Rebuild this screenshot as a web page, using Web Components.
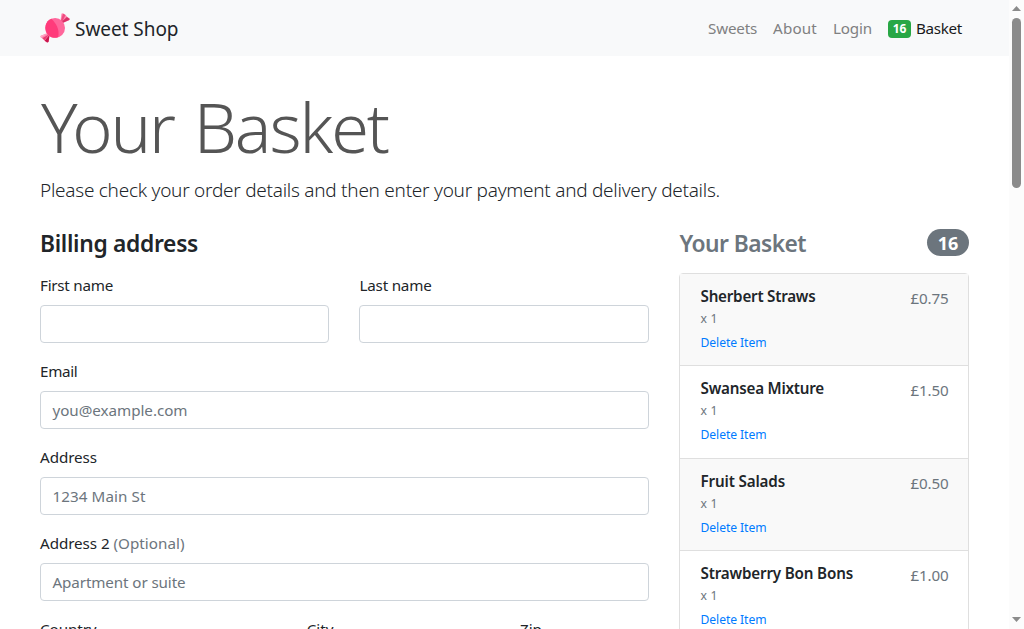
<!DOCTYPE html>
<html lang="en">
<head>
<meta charset="utf-8">
<title>Sweet Shop</title>
<style>
html,body{margin:0;height:100%;overflow:hidden;background:#fff}
body{font:16px/24px "Noto Sans","Open Sans",sans-serif;color:#212529}
</style>
</head>
<body>
<shop-page></shop-page>
<script>
const define = (name, html, setup) => customElements.define(name, class extends HTMLElement {
  connectedCallback() {
    if (this.shadowRoot) return;
    const t = document.createElement('template');
    t.innerHTML = html;
    this.attachShadow({mode: 'open'}).append(t.content.cloneNode(true));
    if (setup) setup(this, this.shadowRoot);
  }
});

/* A single line of text tracked so that it fills the width given in "w". */
define('ui-text', `<style>
:host{display:inline-block;white-space:nowrap;font-size:.95em;vertical-align:top}
span{display:inline-block}
</style><span><slot></slot></span>`, (el, root) => {
  const w = parseFloat(el.getAttribute('w'));
  if (!w) return;
  const s = root.querySelector('span');
  const n = el.textContent.length;
  s.style.letterSpacing = ((w - s.getBoundingClientRect().width) / n) + 'px';
  el.style.width = w + 'px';
});

define('sweet-icon', `<style>:host{display:block;width:30px;height:30px}svg{display:block}</style>
<svg width="30" height="30" viewBox="0 0 30 30">
<path d="M20.4 8 21.4 1Q21.8-.1 22.9 .5L25.6 2.1Q26.9 4.2 29.3 5.3Q30.4 6.2 29.3 7L22.6 9.9Z" fill="#ff8ab2"/>
<path d="M20.8 8 23 .6 25.5 2.1 22.2 9Z" fill="#f04c80"/><path d="m21.8 8.8 5-4.7 2.7 1.6-.2 1.3-6.7 2.9Z" fill="#d92f66"/>
<path d="M9.6 21.8 8.6 28.8Q8.1 30 7 29.4L4.6 27.8Q3.2 25.6 1 24.5Q-.2 23.7 .8 22.8L7.4 20Z" fill="#ff83ad"/>
<path d="m9.6 21.8-1 7-1.3.8L4.6 27.8Z" fill="#c9164d"/><path d="m8 20.5-7 4-.2-1.7Z" fill="#ffabc7"/><path d="m9.2 21.3-4.7 6-2.2-2Z" fill="#e83d72"/>
<circle cx="15.1" cy="14.9" r="9.9" fill="#ff669b"/>
<path d="M11.4 5.8C5.2 8 3.5 16 7.7 21.4 11 25.3 15.6 25.2 18.1 24.2 20 17 16 10 11.4 5.8Z" fill="#ff3b7b"/>
</svg>`);

define('shop-nav', `<style>
:host{display:block;height:56px;background:#f8f9fa}
nav{width:930px;height:100%;margin:0 40px;display:flex;align-items:center;justify-content:space-between}
.brand{display:flex;align-items:center;gap:5px;font-size:20px;line-height:30px;height:30px}
.brand ui-text{padding-top:1px}
.links{display:flex;align-items:center;gap:16px;color:#7f8081;padding-right:8px;height:26px}
.cart{display:flex;gap:5px;align-items:center;color:#181a1b}
.badge{background:#28a745;color:#fff;border-radius:4px;font-weight:700;font-size:12px;line-height:18px;width:23px;height:18px;text-align:center;margin-top:2px}
</style>
<nav><div class="brand"><sweet-icon></sweet-icon><ui-text w="103.5">Sweet Shop</ui-text></div>
<div class="links"><ui-text w="49">Sweets</ui-text><ui-text w="44">About</ui-text><ui-text w="39">Login</ui-text>
<div class="cart"><span class="badge">16</span><ui-text w="46">Basket</ui-text></div></div></nav>`);

define('form-field', `<style>
:host{display:block;min-width:0}
.label{height:24px;margin-bottom:8px;display:flex;gap:4px}
.box{box-sizing:border-box;height:38px;border:1px solid #ced4da;border-radius:4px;background:#fff;padding:6px 11.5px;color:#6c757d}
</style><div class="label"><slot></slot></div><div class="box"><slot name="hint"></slot></div>`);

define('basket-item', `<style>
:host{display:flex;justify-content:space-between;align-items:flex-start;padding:12px 19.5px 0 20.5px;border-bottom:1px solid #dfdfdf;box-sizing:border-box;height:92.4px}
:host(:first-child){height:92px}
:host(:nth-child(odd)){background:#f9f9f9}
.name{display:block;font-weight:600;line-height:21.2px;height:20.2px}
.qty,.del{display:block;height:24px;font-size:12.8px;line-height:25px}
.qty{color:#6c757d}.del{color:#007bff}
.price{color:#6c757d}
</style>
<div><span class="name"><slot name="name"></slot></span><span class="qty"><ui-text w="17">x 1</ui-text></span><span class="del"><ui-text w="66">Delete Item</ui-text></span></div>
<div class="price"><slot name="price"></slot></div>`);

define('basket-panel', `<style>
:host{display:block}
header{display:flex;justify-content:space-between;align-items:center;height:28.8px;margin-bottom:16px;color:#6c757d;font-size:24px;font-weight:600;line-height:28.8px}
header ui-text{padding:4px 0 0 .5px}
.pill{width:42px;height:27px;border-radius:14px;background:#6c757d;color:#fff;font-size:18px;font-weight:700;line-height:28px;text-align:center}
.list{border:1px solid #dfdfdf;border-radius:4px 4px 0 0}
</style>
<header><ui-text w="126.5">Your Basket</ui-text><span class="pill">16</span></header>
<div class="list">
<basket-item><ui-text slot="name" w="115">Sherbert Straws</ui-text><ui-text slot="price" w="38">£0.75</ui-text></basket-item>
<basket-item><ui-text slot="name" w="123.5">Swansea Mixture</ui-text><ui-text slot="price" w="38">£1.50</ui-text></basket-item>
<basket-item><ui-text slot="name" w="84.5">Fruit Salads</ui-text><ui-text slot="price" w="38">£0.50</ui-text></basket-item>
<basket-item><ui-text slot="name" w="152.5">Strawberry Bon Bons</ui-text><ui-text slot="price" w="38">£1.00</ui-text></basket-item>
</div>`);

define('billing-form', `<style>
:host{display:block}
h4{margin:0 0 16px;padding-top:2px;box-sizing:border-box;height:28.8px;font-size:24px;line-height:28.8px;font-weight:600}
.fields{display:grid;gap:16px}
.two{display:grid;grid-template-columns:289px 290px;gap:30px}
.three{display:grid;grid-template-columns:236.67px 183.33px 129px;gap:30px}
.opt{color:#6c757d}
.last{padding-left:.5px}
</style>
<h4><ui-text w="158">Billing address</ui-text></h4>
<div class="fields">
<div class="two"><form-field><ui-text w="73">First name</ui-text></form-field><form-field><ui-text class="last" w="72">Last name</ui-text></form-field></div>
<form-field><ui-text w="37.5">Email</ui-text><ui-text slot="hint" w="135">you@example.com</ui-text></form-field>
<form-field><ui-text w="57">Address</ui-text><ui-text slot="hint" w="93">1234 Main St</ui-text></form-field>
<form-field><ui-text w="69.5">Address 2</ui-text><ui-text class="opt" w="71">(Optional)</ui-text><ui-text slot="hint" w="133">Apartment or suite</ui-text></form-field>
<div class="three"><form-field><ui-text w="56.5">Country</ui-text></form-field><form-field><ui-text w="27">City</ui-text></form-field><form-field><ui-text w="22">Zip</ui-text></form-field></div>
</div>`);

define('scroll-rail', `<style>
:host{display:flex;flex-direction:column;align-items:center;background:#fcfcfc;height:100%}
.thumb{width:9px;height:170px;border-radius:5px;background:#8b8b8b;margin-top:7px}
.down{margin-top:auto;margin-bottom:7px}
svg{display:block;margin-top:6px;flex:none}
</style><svg width="9" height="5"><path d="M4.5 0 9 5H0Z" fill="#8b8b8b"/></svg><div class="thumb"></div>
<svg class="down" width="9" height="5"><path d="M0 0h9L4.5 5Z" fill="#8b8b8b"/></svg>`);

define('shop-page', `<style>
:host{display:grid;grid-template-columns:1009px 15px;height:629px;overflow:hidden}
.page{height:629px;overflow:hidden}
main{padding:24px 40px 0}
h1{margin:0 0 8px;padding:2px 0 0 1px;box-sizing:border-box;height:86.4px;font-size:72px;line-height:89px;font-weight:300;word-spacing:4px;color:#555}
.lead{margin:0 0 24px;height:30px;font-size:20px;line-height:32px;font-weight:300}
.cols{display:grid;grid-template-columns:609px 290px;gap:30px}
</style>
<div class="page"><shop-nav></shop-nav><main>
<h1><ui-text w="347">Your Basket</ui-text></h1>
<p class="lead"><ui-text w="680">Please check your order details and then enter your payment and delivery details.</ui-text></p>
<div class="cols"><billing-form></billing-form><basket-panel></basket-panel></div>
</main></div><scroll-rail></scroll-rail>`);
</script>
</body>
</html>
